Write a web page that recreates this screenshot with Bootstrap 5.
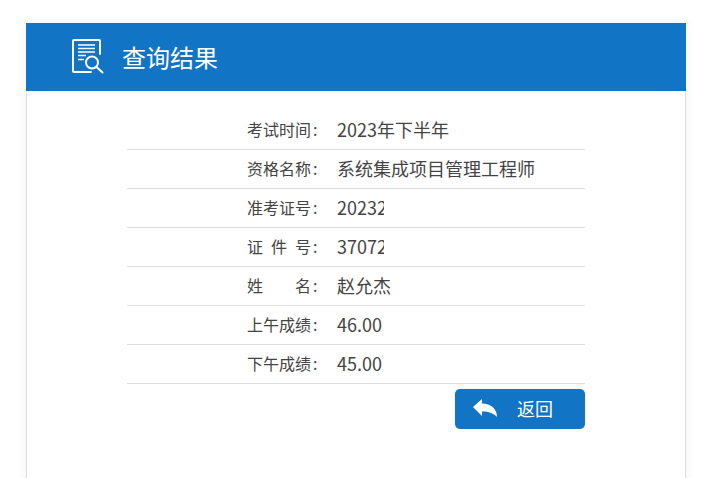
<!DOCTYPE html>
<html lang="zh-CN">
<head>
  <title>查询结果</title>
  <meta charset="UTF-8">
  <meta name="viewport" content="width=device-width, initial-scale=1.0">
  <link href="https://cdn.jsdelivr.net/npm/bootstrap@5.3.2/dist/css/bootstrap.min.css" rel="stylesheet">
  <style>
    html, body {
      height: 100%;
      overflow: hidden;
    }
    body {
      background-color: #fff;
      font-family: "Noto Sans CJK SC", "Liberation Sans", sans-serif;
      padding: 23px 20px 0 26px;
    }
    .result-card {
      border-width: 0 1px;
      border-color: #ddd;
      border-radius: 0;
      box-shadow: 0 0 10px rgba(0, 0, 0, .06);
      min-height: 600px;
    }
    .result-head {
      height: 68px;
      margin: 0 -1px;
      padding-left: 45px;
      gap: 17px;
      background-color: #1174c4;
      color: #fff;
      font-size: 24px;
    }
    .result-body {
      padding: 20px 100px;
    }
    .result-row {
      height: 39px;
      padding-bottom: 2px;
      border-bottom: 1px solid #ddd;
      color: #444;
    }
    .row-label {
      width: 64px;
      margin-left: 120px;
      font-size: 16px;
      text-align-last: justify;
    }
    .row-colon {
      width: 26px;
      padding-left: 2px;
      font-size: 16px;
    }
    .row-value {
      font-size: 18px;
      white-space: nowrap;
    }
    .row-clip {
      width: 47px;
      overflow: hidden;
    }
    .back-btn {
      width: 130px;
      height: 40px;
      margin-top: 5px;
      padding: 0 0 2px 18px;
      gap: 20px;
      background-color: #1174c4;
      border: none;
      border-radius: 5px;
      color: #fff;
      font-size: 18px;
    }
    .back-btn:hover {
      background-color: #0f66ad;
      color: #fff;
    }
  </style>
</head>
<body>
  <div class="card result-card">
    <div class="result-head d-flex align-items-center">
      <svg width="34" height="38" viewBox="0 0 34 38" fill="none" stroke="#fff" stroke-width="2">
        <path d="M29 16V3Q29 2 28 2H3Q2 2 2 3V33Q2 34 3 34H20" stroke-linecap="round" />
        <path d="M7 7H24M7 10.5H24M7 14H24" stroke-width="1.6" />
        <path d="M7 17.5H15M7 21.5H13" stroke-width="1.6" />
        <circle cx="21" cy="24.5" r="6" />
        <path d="M25.5 29L31.5 34.5" stroke-linecap="round" />
      </svg>
      <span>查询结果</span>
    </div>
    <div class="result-body">
      <div class="result-row d-flex align-items-center">
        <div class="row-label">考试时间</div><div class="row-colon">:</div>
        <div class="row-value">2023年下半年</div>
      </div>
      <div class="result-row d-flex align-items-center">
        <div class="row-label">资格名称</div><div class="row-colon">:</div>
        <div class="row-value">系统集成项目管理工程师</div>
      </div>
      <div class="result-row d-flex align-items-center">
        <div class="row-label">准考证号</div><div class="row-colon">:</div>
        <div class="row-value row-clip">20232</div>
      </div>
      <div class="result-row d-flex align-items-center">
        <div class="row-label">证 件 号</div><div class="row-colon">:</div>
        <div class="row-value row-clip">37072</div>
      </div>
      <div class="result-row d-flex align-items-center">
        <div class="row-label">姓 名</div><div class="row-colon">:</div>
        <div class="row-value">赵允杰</div>
      </div>
      <div class="result-row d-flex align-items-center">
        <div class="row-label">上午成绩</div><div class="row-colon">:</div>
        <div class="row-value">46.00</div>
      </div>
      <div class="result-row d-flex align-items-center">
        <div class="row-label">下午成绩</div><div class="row-colon">:</div>
        <div class="row-value">45.00</div>
      </div>
      <div class="d-flex justify-content-end">
        <a href="#" class="btn back-btn d-flex align-items-center">
          <svg width="24" height="18" viewBox="0 0 24 18" fill="#fff">
            <path d="M0 8L9 0V4.5C18 4.5 24 10 24 18C21 14.5 16 12.5 9 12.5V17Z" />
          </svg>
          <span>返回</span>
        </a>
      </div>
    </div>
  </div>

  <script src="https://cdn.jsdelivr.net/npm/bootstrap@5.3.2/dist/js/bootstrap.bundle.min.js"></script>
</body>
</html>
